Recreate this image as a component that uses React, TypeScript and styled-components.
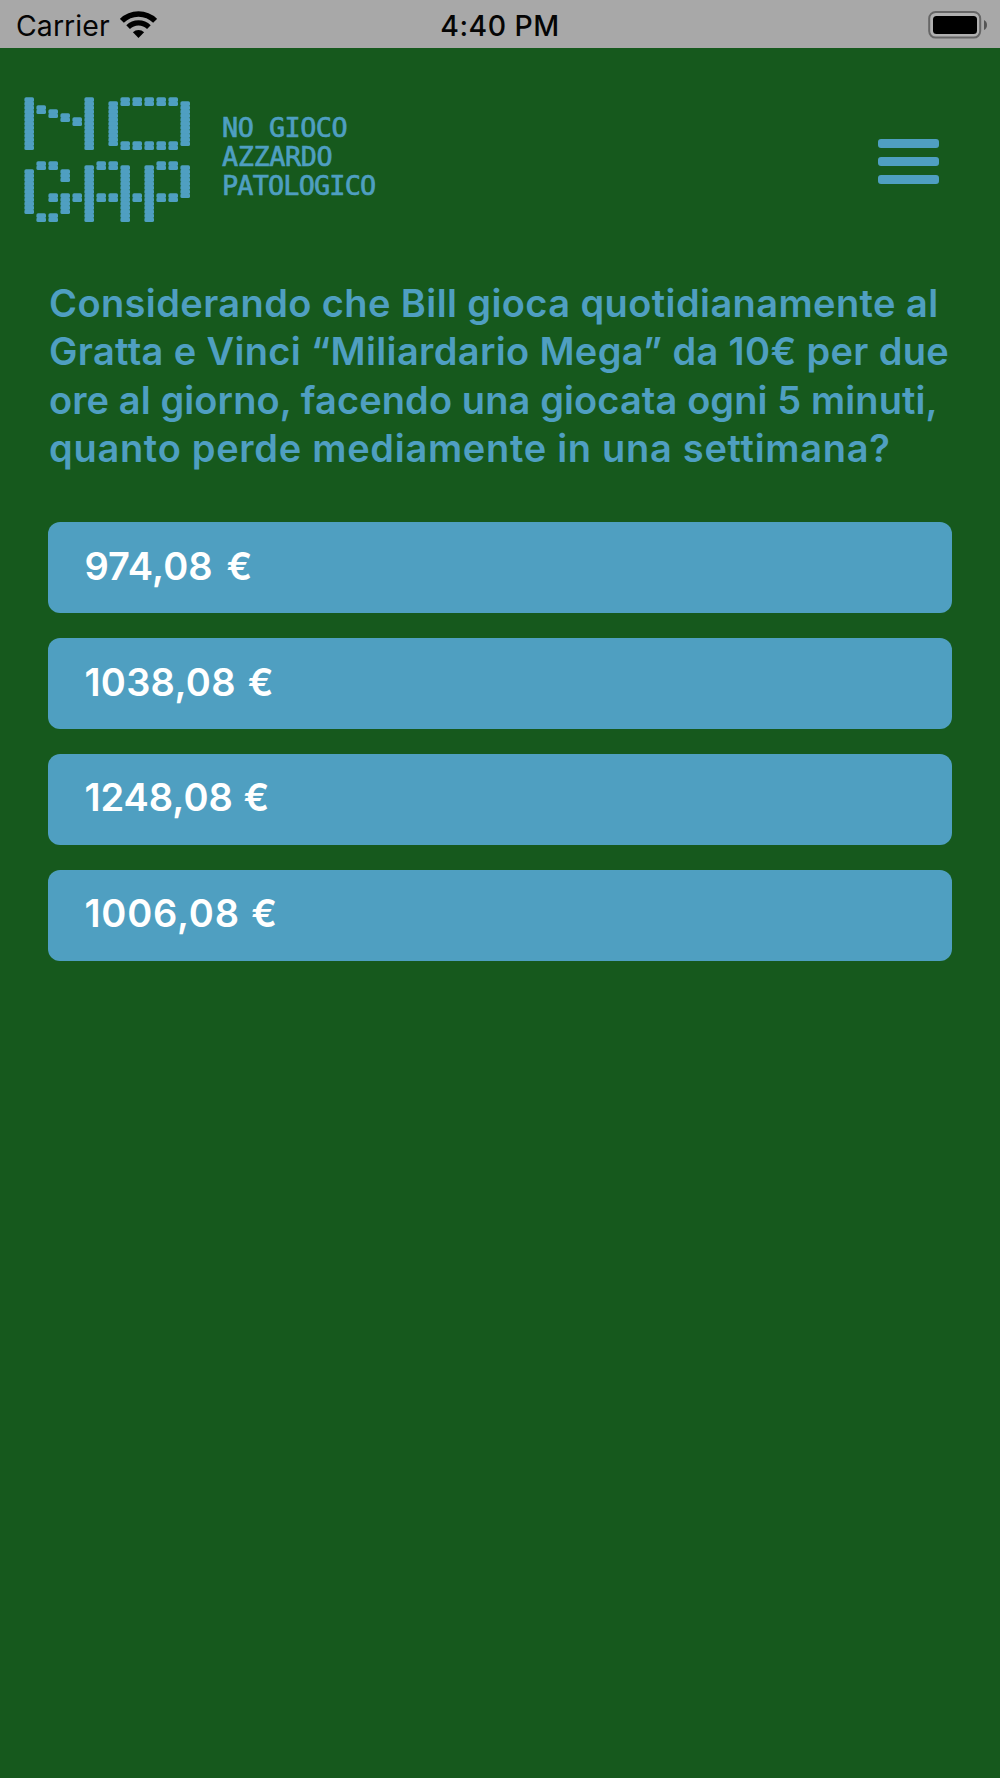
import React from "react";
import styled, { createGlobalStyle } from "styled-components";

const GREEN = "#16591d";
const BLUE = "#4f9fc1";

const GlobalStyle = createGlobalStyle`
  * { box-sizing: border-box; }
  body { margin: 0; background: ${GREEN}; }
`;

const Screen = styled.div`
  display: flex;
  flex-direction: column;
  width: 1000px;
  min-height: 1778px;
  background: ${GREEN};
`;

const StatusBar = styled.div`
  display: grid;
  grid-template-columns: 1fr auto 1fr;
  align-items: center;
  height: 48px;
  padding: 0 13px 0 16px;
  background: #a8a8a8;
  color: #050505;
  font-family: Inter, "Liberation Sans", sans-serif;
  font-size: 28.4px;
  line-height: 48px;
`;

const Network = styled.div`
  display: flex;
  align-items: center;
  gap: 10px;
`;

const Carrier = styled.span`
  letter-spacing: 0.1px;
  padding-top: 2px;
`;

const Clock = styled.span`
  font-weight: 500;
  letter-spacing: 0.5px;
  padding: 2px 3px 0 0;
`;

const BatteryIcon = styled.svg`
  justify-self: end;
  display: block;
`;

const Header = styled.header`
  display: flex;
  align-items: flex-start;
  height: 222px;
  padding: 48px 61px 0 24px;
`;

const LogoText = styled.div`
  display: flex;
  flex-direction: column;
  margin: 17px 0 0 31px;
  color: ${BLUE};
  font-family: "DejaVu Sans Mono", monospace;
  font-size: 26.8px;
  line-height: 29px;
  -webkit-text-stroke: 0.7px ${BLUE};
`;

const SpacedLine = styled.span<{ $spacing: number; $word?: number }>`
  display: block;
  white-space: pre;
  letter-spacing: ${(p) => p.$spacing}px;
  word-spacing: ${(p) => p.$word ?? 0}px;
`;

const MenuButton = styled.button`
  display: flex;
  flex-direction: column;
  gap: 8.8px;
  margin: 43px 0 0 auto;
  padding: 0;
  border: 0;
  background: none;
`;

const MenuBar = styled.span`
  width: 61px;
  height: 9.3px;
  border-radius: 3px;
  background: ${BLUE};
`;

const Main = styled.main`
  padding: 9px 48.4px 0;
  font-family: Inter, "Liberation Sans", sans-serif;
  font-weight: 600;
  font-size: 38px;
`;

const Question = styled.h1`
  margin: 0 0 49px;
  padding-left: 0.6px;
  color: ${BLUE};
  font: inherit;
  line-height: 48.4px;
`;

const Options = styled.div`
  display: flex;
  flex-direction: column;
  gap: 24.2px;
`;

const Option = styled.button`
  display: flex;
  align-items: center;
  height: 91.8px;
  padding: 0 36px 4px;
  border: 0;
  border-radius: 12px;
  background: ${BLUE};
  color: #fff;
  font: inherit;
`;

type Segment = [col: number, first: number, last: number];

const segments: Segment[] = [
  [0, 0, 12], [1, 2, 3], [2, 3, 4], [3, 4, 5], [4, 5, 6], [5, 0, 12],
  [7, 1, 11], [13, 1, 11],
  ...[8, 9, 10, 11, 12].flatMap((c): Segment[] => [[c, 0, 1], [c, 11, 12]]),
  [0, 18, 28], [1, 16, 17], [2, 16, 17], [1, 29, 30], [2, 29, 30],
  [3, 18, 20], [2, 24, 25], [3, 24, 28], [4, 24, 25],
  [5, 17, 30], [6, 16, 17], [7, 16, 17], [6, 24, 25], [7, 24, 25], [8, 17, 30],
  [9, 24, 25], [10, 17, 30], [11, 16, 17], [12, 16, 17],
  [11, 24, 25], [12, 24, 25], [13, 17, 24],
];

const Logo = () => (
  <svg width="167" height="130" viewBox="0 0 167 130" fill={BLUE}>
    {segments.flatMap(([col, first, last]) =>
      Array.from({ length: last - first + 1 }, (_, i) => (
        <rect
          key={`${col}-${first + i}`}
          x={0.4 + col * 12}
          y={1.2 + (first + i) * 4}
          width="9.6"
          height="4.9"
          rx="1.7"
        />
      ))
    )}
  </svg>
);

const Wifi = () => (
  <svg width="37" height="28" viewBox="0 0 37 28" fill="none" stroke="#000">
    <path d="M1.9 9.8a23.6 23.6 0 0 1 33.2 0" strokeWidth="5.6" />
    <path d="M8.1 16.2a14.8 14.8 0 0 1 20.8 0" strokeWidth="5.2" />
    <path d="M12.9 21.2a8.2 8.2 0 0 1 11.2 0L18.5 27z" fill="#000" stroke="none" />
  </svg>
);

const Battery = () => (
  <BatteryIcon width="59" height="28" viewBox="0 0 59 28">
    <rect x="1.2" y="1" width="51" height="25.6" rx="6.5" fill="#b0b0b0" stroke="#666" strokeWidth="2" />
    <rect x="5" y="5" width="44" height="18" rx="3.5" fill="#000" />
    <path d="M56 9q3 1.5 3 5t-3 5z" fill="#555" />
  </BatteryIcon>
);

const logoLines: [string, number][] = [
  ["NO GIOCO", -0.5],
  ["AZZARDO", -0.4],
  ["PATOLOGICO", -0.8],
];

const question: [string, number][] = [
  ["Considerando che Bill gioca quotidianamente al", 0.4],
  ["Gratta e Vinci “Miliardario Mega” da 10€ per due", 0.35],
  ["ore al giorno, facendo una giocata ogni 5 minuti,", 0.1],
  ["quanto perde mediamente in una settimana?", 0.71],
];

const options: [string, number, number][] = [
  ["974,08 €", 0.1, 4],
  ["1038,08 €", 0.3, 2],
  ["1248,08 €", 0, 1],
  ["1006,08 €", 0.8, 1],
];

export default function App() {
  return (
    <Screen>
      <GlobalStyle />
      <StatusBar>
        <Network>
          <Carrier>Carrier</Carrier>
          <Wifi />
        </Network>
        <Clock>4:40 PM</Clock>
        <Battery />
      </StatusBar>
      <Header>
        <Logo />
        <LogoText>
          {logoLines.map(([t, s]) => (
            <SpacedLine key={t} $spacing={s}>{t}</SpacedLine>
          ))}
        </LogoText>
        <MenuButton aria-label="Menu">
          <MenuBar />
          <MenuBar />
          <MenuBar />
        </MenuButton>
      </Header>
      <Main>
        <Question>
          {question.map(([t, s]) => (
            <SpacedLine key={t} $spacing={s}>{t}</SpacedLine>
          ))}
        </Question>
        <Options>
          {options.map(([t, s, w]) => (
            <Option key={t}>
              <SpacedLine $spacing={s} $word={w}>{t}</SpacedLine>
            </Option>
          ))}
        </Options>
      </Main>
    </Screen>
  );
}
